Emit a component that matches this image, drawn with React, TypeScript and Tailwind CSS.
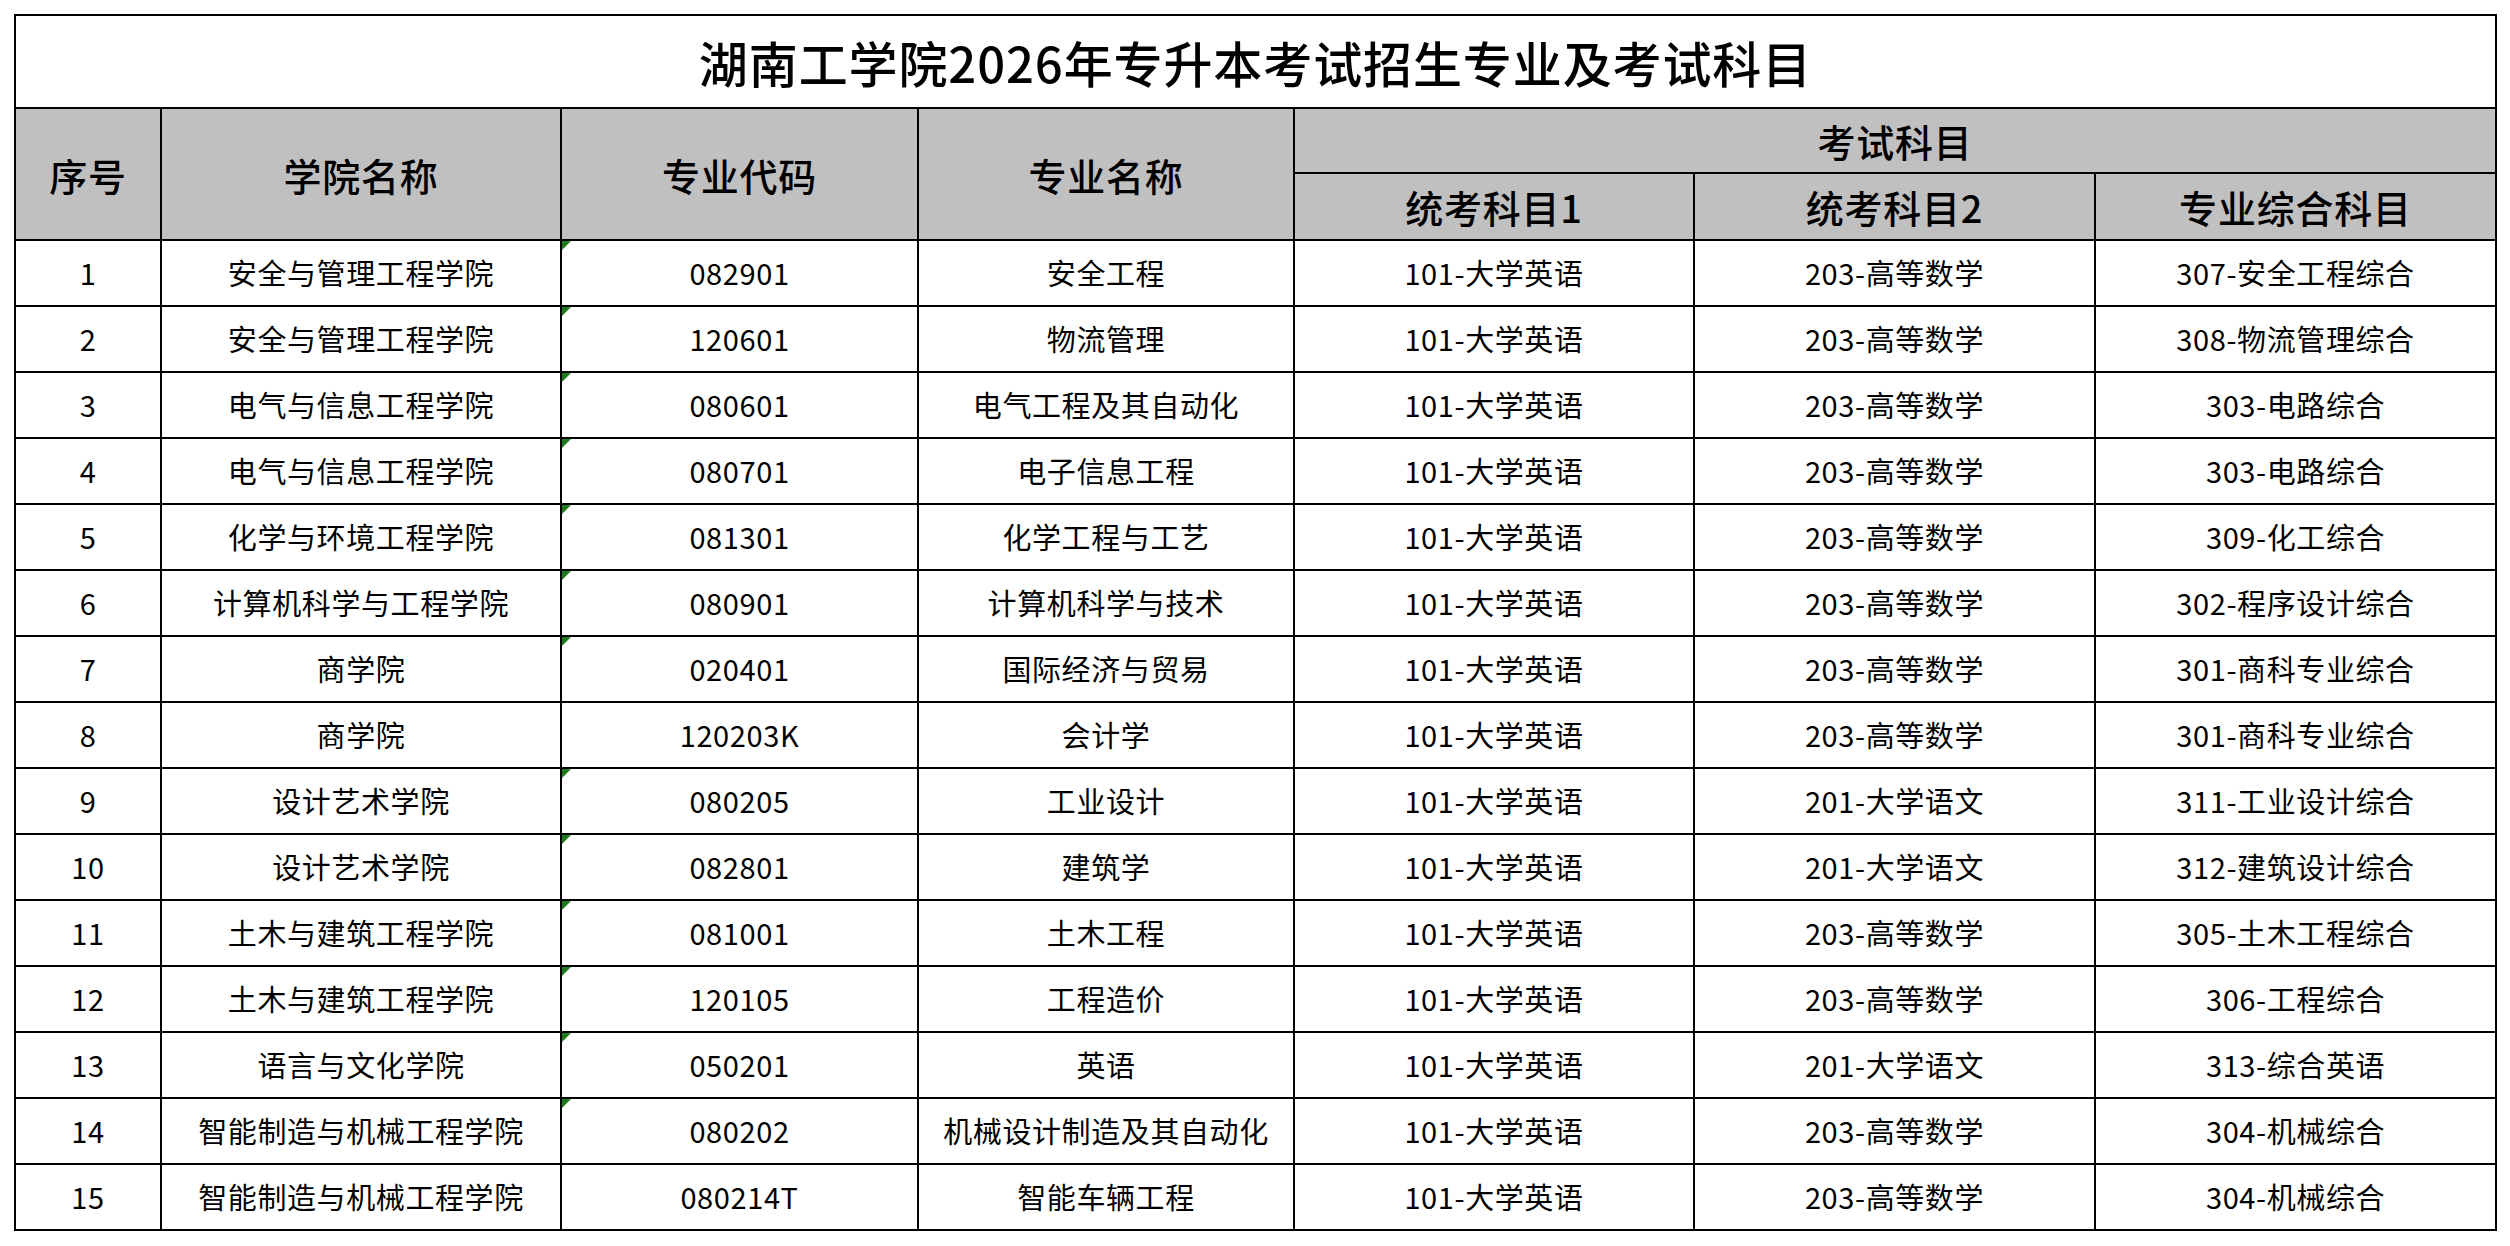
import React from 'react'

type Row = {
  no: number
  school: string
  code: string
  major: string
  s1: string
  s2: string
  s3: string
  mark: boolean
}

const rows: Row[] = [
  { no: 1, school: '安全与管理工程学院', code: '082901', major: '安全工程', s1: '101-大学英语', s2: '203-高等数学', s3: '307-安全工程综合', mark: true },
  { no: 2, school: '安全与管理工程学院', code: '120601', major: '物流管理', s1: '101-大学英语', s2: '203-高等数学', s3: '308-物流管理综合', mark: true },
  { no: 3, school: '电气与信息工程学院', code: '080601', major: '电气工程及其自动化', s1: '101-大学英语', s2: '203-高等数学', s3: '303-电路综合', mark: true },
  { no: 4, school: '电气与信息工程学院', code: '080701', major: '电子信息工程', s1: '101-大学英语', s2: '203-高等数学', s3: '303-电路综合', mark: true },
  { no: 5, school: '化学与环境工程学院', code: '081301', major: '化学工程与工艺', s1: '101-大学英语', s2: '203-高等数学', s3: '309-化工综合', mark: true },
  { no: 6, school: '计算机科学与工程学院', code: '080901', major: '计算机科学与技术', s1: '101-大学英语', s2: '203-高等数学', s3: '302-程序设计综合', mark: true },
  { no: 7, school: '商学院', code: '020401', major: '国际经济与贸易', s1: '101-大学英语', s2: '203-高等数学', s3: '301-商科专业综合', mark: true },
  { no: 8, school: '商学院', code: '120203K', major: '会计学', s1: '101-大学英语', s2: '203-高等数学', s3: '301-商科专业综合', mark: false },
  { no: 9, school: '设计艺术学院', code: '080205', major: '工业设计', s1: '101-大学英语', s2: '201-大学语文', s3: '311-工业设计综合', mark: true },
  { no: 10, school: '设计艺术学院', code: '082801', major: '建筑学', s1: '101-大学英语', s2: '201-大学语文', s3: '312-建筑设计综合', mark: true },
  { no: 11, school: '土木与建筑工程学院', code: '081001', major: '土木工程', s1: '101-大学英语', s2: '203-高等数学', s3: '305-土木工程综合', mark: true },
  { no: 12, school: '土木与建筑工程学院', code: '120105', major: '工程造价', s1: '101-大学英语', s2: '203-高等数学', s3: '306-工程综合', mark: true },
  { no: 13, school: '语言与文化学院', code: '050201', major: '英语', s1: '101-大学英语', s2: '201-大学语文', s3: '313-综合英语', mark: true },
  { no: 14, school: '智能制造与机械工程学院', code: '080202', major: '机械设计制造及其自动化', s1: '101-大学英语', s2: '203-高等数学', s3: '304-机械综合', mark: true },
  { no: 15, school: '智能制造与机械工程学院', code: '080214T', major: '智能车辆工程', s1: '101-大学英语', s2: '203-高等数学', s3: '304-机械综合', mark: false },
]

const th = 'border-2 border-black bg-[#c0c0c0] text-[38px] font-medium tracking-[0.8px] text-black text-center align-middle p-0'
const td = 'border-2 border-black text-[29px] tracking-[0.6px] text-black text-center align-middle p-0'

const App = () => {
  return (
    <div
      className="min-h-screen w-full bg-white pl-[14px] pt-[14px]"
      style={{ fontFamily: '"Noto Sans CJK SC", "Noto Sans", sans-serif' }}
    >
      <table className="table-fixed border-collapse w-[2481px]">
        <colgroup>
          <col className="w-[146px]" />
          <col className="w-[400px]" />
          <col className="w-[357px]" />
          <col className="w-[376px]" />
          <col className="w-[400px]" />
          <col className="w-[401px]" />
          <col className="w-[401px]" />
        </colgroup>
        <thead>
          <tr className="h-[93px]">
            <th colSpan={7} className="border-2 border-black text-[49px] font-medium tracking-[0.9px] text-black text-center align-middle p-0">
              湖南工学院2026年专升本考试招生专业及考试科目
            </th>
          </tr>
          <tr className="h-[65px]">
            <th rowSpan={2} className={th}>序号</th>
            <th rowSpan={2} className={th}>学院名称</th>
            <th rowSpan={2} className={th}>专业代码</th>
            <th rowSpan={2} className={th}>专业名称</th>
            <th colSpan={3} className={th}>考试科目</th>
          </tr>
          <tr className="h-[67px]">
            <th className={th}>统考科目1</th>
            <th className={th}>统考科目2</th>
            <th className={th}>专业综合科目</th>
          </tr>
        </thead>
        <tbody>
          {rows.map((r) => (
            <tr key={r.no} className="h-[66px]">
              <td className={td}>{r.no}</td>
              <td className={td}>{r.school}</td>
              <td className={`${td} relative`}>
                {r.mark && (
                  <span className="absolute left-0 top-0 w-0 h-0 border-t-[9px] border-r-[9px] border-t-[#1e7b1e] border-r-transparent" />
                )}
                {r.code}
              </td>
              <td className={td}>{r.major}</td>
              <td className={td}>{r.s1}</td>
              <td className={td}>{r.s2}</td>
              <td className={td}>{r.s3}</td>
            </tr>
          ))}
        </tbody>
      </table>
    </div>
  )
}

export default App
